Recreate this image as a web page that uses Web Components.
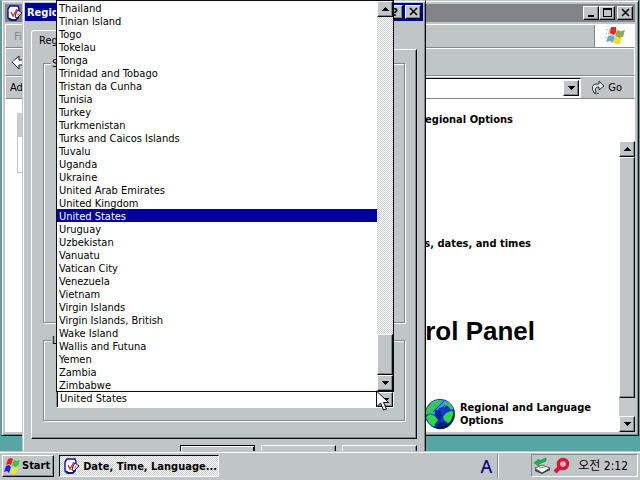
<!DOCTYPE html>
<html lang="en">
<head>
<meta charset="utf-8">
<title>Desktop</title>
<style>
    body{
        margin:0;
        --face:#c0c6c8;
        --light:#ffffff;
        --shade:#83898b;
        --dark:#0a0c10;
        --navy:#00009a;
        --desk:#57a6a5;
        --dither:repeating-conic-gradient(#ffffff 0 25%, #c8cccd 0 50%) 0 0 / 2px 2px;
        font:11px/13px "DejaVu Sans Condensed", "Noto Sans CJK KR", sans-serif;
        color:#000;
    }
</style>
</head>
<body>
<desk-top></desk-top>

<script>
const shared = /*css*/`
    *{
        box-sizing:border-box;
    }
    svg{
        display:block;
    }
    button,input,select{
        font:inherit;
        color:inherit;
        margin:0;
        padding:0;
        border:0;
        border-radius:0;
        outline:none;
    }
    .raised{
        background:var(--face);
        border:1px solid;
        border-color:var(--light) var(--dark) var(--dark) var(--light);
        box-shadow:inset -1px -1px 0 var(--shade);
    }
`;

const noteIcon = /*html*/`
    <svg width="16" height="16" viewBox="0 0 16 16">
        <path d="M3 1h8l1 3-1 9-3 2H3l-2-2V4z" fill="#fff" stroke="#10108c" stroke-width="1.4"/>
        <path d="M2 13l3 2h4l2-3" fill="none" stroke="#0c0c60" stroke-width="1.4"/>
        <path d="M4 7l2 4 4-7" fill="none" stroke="#c04038" stroke-width="1.5"/>
        <path d="M11 5l4 3-5 5-2-1 1-4z" fill="#f4e8e0" stroke="#14145c"/>
        <path d="M10 9l3-1-2 3z" fill="#e08050"/>
    </svg>`;

const arrow = (dir) => /*html*/`
    <svg width="7" height="4" viewBox="0 0 7 4" shape-rendering="crispEdges">
        <path d="${dir === 'up' ? 'M0 4L3 0h1l3 4z' : 'M0 0h7L4 4H3z'}" fill="#000"/>
    </svg>`;

class ScrollBar extends HTMLElement {
    constructor() {
        super();
        this.attachShadow({ mode: 'open' });
    }

    connectedCallback() {
        const [before, thumb, after] = this.getAttribute('parts').split(' ');
        this.shadowRoot.innerHTML = /*html*/`
        <style>
            ${shared}
            :host{
                display:flex;
                flex-direction:column;
                width:16px;
                background:var(--track, var(--dither));
            }
            button{
                display:grid;
                place-items:center;
                height:16px;
                flex:none;
            }
        </style>
        <button class="raised" aria-label="Up">${arrow('up')}</button>
        <span style="flex:${before} 0 0"></span>
        <span class="raised" style="flex:${thumb} 0 0"></span>
        <span style="flex:${after} 0 0"></span>
        <button class="raised" aria-label="Down">${arrow('down')}</button>
        `;
    }
}
customElements.define('scroll-bar', ScrollBar);

class TitleBar extends HTMLElement {
    constructor() {
        super();
        this.attachShadow({ mode: 'open' });
    }

    glyph(name) {
        if (name === 'help') return '?';
        const shapes = {
            min: '<path d="M2 7h6v2H2z"/>',
            max: '<path d="M1 0h9v9H1zM2 2v6h7V2z" fill-rule="evenodd"/>',
            close: '<path d="M2 1l7 7M9 1L2 8" fill="none" stroke="#000" stroke-width="1.500"/>'
        };
        return `<svg width="11" height="10" viewBox="0 0 11 10">${shapes[name]}</svg>`;
    }

    connectedCallback() {
        const names = this.getAttribute('buttons').split(' ');
        this.shadowRoot.innerHTML = /*html*/`
        <style>
            ${shared}
            :host{
                display:flex;
                align-items:center;
                height:18px;
                padding:0 2px;
                background:var(--bar, #82848a);
                color:#fff;
                font-weight:bold;
            }
            .title{
                flex:1;
                display:flex;
                white-space:nowrap;
            }
            button{
                display:grid;
                place-items:center;
                width:16px;
                height:14px;
                color:#000;
            }
            .close{
                margin-left:2px;
            }
        </style>
        <div class="title"><slot></slot></div>
        ${names.map(n => `<button class="raised ${n}" aria-label="${n}">${this.glyph(n)}</button>`).join('')}
        `;
    }
}
customElements.define('title-bar', TitleBar);

class DropList extends HTMLElement {
    constructor() {
        super();
        this.attachShadow({ mode: 'open' });
    }

    static get items() {
        return ['Thailand', 'Tinian Island', 'Togo', 'Tokelau', 'Tonga', 'Trinidad and Tobago',
            'Tristan da Cunha', 'Tunisia', 'Turkey', 'Turkmenistan', 'Turks and Caicos Islands',
            'Tuvalu', 'Uganda', 'Ukraine', 'United Arab Emirates', 'United Kingdom',
            'United States', 'Uruguay', 'Uzbekistan', 'Vanuatu', 'Vatican City', 'Venezuela',
            'Vietnam', 'Virgin Islands', 'Virgin Islands, British', 'Wake Island',
            'Wallis and Futuna', 'Yemen', 'Zambia', 'Zimbabwe'];
    }

    connectedCallback() {
        const value = this.getAttribute('value');
        this.shadowRoot.innerHTML = /*html*/`
        <style>
            ${shared}
            :host{
                display:block;
                position:relative;
                z-index:2;
            }
            .box{
                display:flex;
                height:18px;
                background:#fff;
                border:1px solid;
                border-color:var(--shade) var(--light) var(--light) var(--shade);
                box-shadow:inset 1px 1px 0 var(--dark);
            }
            select{
                appearance:none;
                flex:1;
                min-width:0;
                padding:0 0 2px 3px;
                background:transparent;
            }
            .box span{
                display:grid;
                place-items:center;
                width:16px;
                margin-top:1px;
            }
            /* the open list hangs off the closed box */
            .list{
                position:absolute;
                bottom:calc(100% - 2px);
                left:0;
                right:0;
                display:flex;
                background:#fff;
                border:1px solid var(--dark);
            }
            ul{
                flex:1;
                margin:0;
                padding:0;
                list-style:none;
            }
            li{
                height:13px;
                padding:1px 0 0 2px;
                line-height:13px;
            }
            .on{
                background:var(--navy);
                color:#fff;
            }
        </style>
        <div class="box">
            <select aria-label="Location"><option>${value}</option></select>
            <span class="raised">${arrow('down')}</span>
        </div>
        <div class="list">
            <ul role="listbox" aria-label="Location">
                ${DropList.items.map(i => `<li role="option" class="${i === value ? 'on' : ''}">${i}</li>`).join('')}
            </ul>
            <scroll-bar parts="319 39 0"></scroll-bar>
        </div>
        `;
    }
}
customElements.define('drop-list', DropList);

class RegionDialog extends HTMLElement {
    constructor() {
        super();
        this.attachShadow({ mode: 'open' });
    }

    connectedCallback() {
        this.shadowRoot.innerHTML = /*html*/`
        <style>
            ${shared}
            :host{
                display:block;
                width:404px;
                padding:1px;
                background:var(--face);
                border:1px solid;
                border-color:var(--face) var(--dark) var(--dark) var(--face);
                box-shadow:inset 1px 1px 0 var(--light), inset -1px -1px 0 var(--shade);
            }
            title-bar{
                --bar:var(--navy);
                margin:1px 1px 0;
            }
            .body{
                padding:9px 7px 7px;
            }
            .tab{
                display:block;
                position:relative;
                z-index:1;
                height:20px;
                margin-bottom:-1px;
                padding:0 7px;
                background:var(--face);
                border:1px solid;
                border-color:var(--light) var(--dark) transparent var(--light);
                border-radius:3px 3px 0 0;
            }
            .panel{
                padding:7px 11px 17px;
                border:1px solid;
                border-color:var(--light) var(--dark) var(--dark) var(--light);
                box-shadow:inset -1px -1px 0 var(--shade);
            }
            fieldset{
                min-width:0;
                margin:0;
                padding:43px 10px 12px 12px;
                border:1px solid var(--shade);
                box-shadow:1px 1px 0 var(--light), inset 1px 1px 0 var(--light);
            }
            fieldset + fieldset{
                margin-top:11px;
            }
            .formats{
                min-height:266px;
            }
            legend{
                margin-left:-5px;
                padding:0 1px;
                background:var(--face);
            }
            .actions{
                display:flex;
                justify-content:flex-end;
                gap:6px;
                margin-top:6px;
            }
            .actions button{
                width:75px;
                height:23px;
            }
            .actions .default{
                border-color:var(--dark);
                box-shadow:inset 1px 1px 0 var(--light), inset -1px -1px 0 var(--dark);
            }
        </style>
        <title-bar buttons="help close">Regional and Language Options</title-bar>
        <div class="body">
            <button class="tab">Regional Options</button>
            <div class="panel">
                <fieldset class="formats">
                    <legend>Standards and formats</legend>
                </fieldset>
                <fieldset>
                    <legend>Location</legend>
                    <drop-list value="United States"></drop-list>
                </fieldset>
            </div>
            <div class="actions">
                <button class="raised default" aria-label="OK"></button>
                <button class="raised" aria-label="Cancel"></button>
                <button class="raised" aria-label="Apply"></button>
            </div>
        </div>
        `;
    }
}
customElements.define('region-dialog', RegionDialog);

class ExplorerWindow extends HTMLElement {
    constructor() {
        super();
        this.attachShadow({ mode: 'open' });
    }

    static get globe() {
        return /*html*/`
        <svg width="32" height="32" viewBox="0 0 32 32">
            <circle cx="16" cy="16" r="15" fill="#1238c8"/>
            <path d="M8 4Q16 0 24 4L21 9l-6 1-5 7-4-2z" fill="#3c9ee0"/>
            <path d="M9 14L20 3M11 16L23 5M8 10l6-7M14 17l9-9" stroke="#1638b8"/>
            <path d="M3 10L8 4l5-2 5 1-4 4-3 2-2 5-4 2-4 1z" fill="#38c850"/>
            <path d="M2 19l4-3 5 2 3 4-3 4-1 3-5-4z" fill="#30d848"/>
            <path d="M21 3l5 2 4 6-3 1-3-4-4-1z" fill="#48b868"/>
            <path d="M19 19l3-4 5-2 4 1v5l-3 5-4 1-4-3z" fill="#30d848"/>
            <path d="M11 12l5 1 2 5-3 4-4-4z" fill="#0a2488"/>
            <path d="M14 25l6-1 4 3-6 4-6-1z" fill="#082070"/>
            <path d="M29 9Q34 20 24 29Q15 34 7 28Q16 32 23 27Q31 20 29 9z" fill="#061a50"/>
        </svg>`;
    }

    connectedCallback() {
        this.shadowRoot.innerHTML = /*html*/`
        <style>
            ${shared}
            :host{
                display:flex;
                flex-direction:column;
                padding:2px;
                background:var(--face);
                border:1px solid;
                border-color:var(--face) var(--dark) var(--dark) var(--shade);
                box-shadow:inset 1px 1px 0 var(--light), inset -1px -1px 0 var(--shade);
            }
            title-bar{
                margin:1px 1px 2px;
            }
            .bar{
                display:flex;
                align-items:center;
                margin:0 1px;
                border:1px solid;
                border-color:var(--light) var(--light) var(--shade) var(--light);
            }
            .bar button{
                background:none;
            }
            .menu{
                height:24px;
                padding-left:8px;
                color:#84888a;
            }
            .menu .logo{
                display:grid;
                place-items:center;
                align-self:stretch;
                width:40px;
                margin-left:auto;
                background:#fff;
                border-left:1px solid var(--shade);
            }
            .tools{
                height:28px;
                padding-left:5px;
            }
            .address{
                height:23px;
                gap:6px;
                padding:0 12px 0 4px;
            }
            .field{
                flex:1;
                display:flex;
                height:20px;
                padding:1px;
                background:#fff;
                border:1px solid;
                border-color:var(--dark) var(--light) var(--light) var(--dark);
            }
            .field input{
                flex:1;
                min-width:0;
            }
            .bar .field button{
                display:grid;
                place-items:center;
                width:16px;
                background:var(--face);
            }
            .go{
                display:flex;
                align-items:center;
                gap:3px;
                padding-left:4px;
            }
            .content{
                flex:1;
                display:grid;
                grid-template-columns:180px 1fr 16px;
                margin:0 1px 1px;
                padding-left:12px;
                background:#fff;
                min-height:0;
                font-weight:bold;
            }
            aside{
                height:60px;
                margin-top:14px;
                border:1px solid #c0c4c6;
                border-top:24px solid #c8cccd;
            }
            main{
                padding:14px 0 0 20px;
            }
            p,h1,h2{
                margin:0;
                font-size:11px;
                text-align:right;
                white-space:nowrap;
            }
            h1{
                width:296px;
            }
            p{
                width:314px;
                margin-top:111px;
            }
            h2{
                width:318px;
                margin:66px 0 52px;
                font:bold 26px/30px "Liberation Sans", sans-serif;
            }
            a{
                display:flex;
                align-items:center;
                gap:4px;
                width:175px;
                margin-left:207px;
                color:inherit;
                text-decoration:none;
            }
            a svg{
                flex:none;
            }
            scroll-bar{
                --track:#c4cacc;
                margin-top:42px;
            }
        </style>
        <title-bar buttons="min max close">${noteIcon}</title-bar>
        <div class="bar menu">
            <button>File</button>
            <span class="logo">
                <svg width="20" height="20" viewBox="0 0 20 20">
                    <path d="M4 3l4-2 4 2-2 6-4-1-3 1z" fill="#d8b8a8"/>
                    <path d="M6 1l5 0 0 5-2 3-4-2z" fill="#e02828"/>
                    <path d="M12 4l4 1 4-1-2 7-4 1-4-2z" fill="#90a858"/>
                    <path d="M3 10l4-1 3 2-2 6-3-2-4 1z" fill="#70a8c8"/>
                    <path d="M10 11l4 1 3-1-2 7-4 0-3-2z" fill="#f0e020"/>
                    <path d="M1 4l2-1M0 8l2-1M0 12l2-1" stroke="#c0b0b0"/>
                </svg>
            </span>
        </div>
        <div class="bar tools">
            <button aria-label="Back">
                <svg width="20" height="16" viewBox="0 0 20 16">
                    <path d="M1 8l7-6v4h11v5H8v4z" fill="#fff" stroke="#101828"/>
                    <path d="M1 8l3-3" stroke="#b06070"/>
                </svg>
            </button>
        </div>
        <div class="bar address">
            <label for="addr">Address</label>
            <div class="field">
                <input id="addr" type="text">
                <button class="raised" aria-label="Open">${arrow('down')}</button>
            </div>
            <button class="go">
                <svg width="14" height="15" viewBox="0 0 14 15">
                    <path d="M3 13Q-1 5 5 4L8 4V1l5 5-5 4V7Q3 6 5 13z" fill="#e4eaea" stroke="#303638"/>
                    <path d="M3 13q2 2 5 0" fill="none" stroke="#50585a"/>
                </svg>
                Go
            </button>
        </div>
        <div class="content">
            <aside></aside>
            <main>
                <h1>Date, Time, Language, and Regional Options</h1>
                <p>Change the format of numbers, dates, and times</p>
                <h2>or pick a Control Panel</h2>
                <a href="#">${ExplorerWindow.globe}<span>Regional and Language Options</span></a>
            </main>
            <scroll-bar parts="0 241 18"></scroll-bar>
        </div>
        `;
    }
}
customElements.define('explorer-window', ExplorerWindow);

class TaskBar extends HTMLElement {
    constructor() {
        super();
        this.attachShadow({ mode: 'open' });
    }

    connectedCallback() {
        this.shadowRoot.innerHTML = /*html*/`
        <style>
            ${shared}
            :host{
                display:flex;
                align-items:center;
                height:29px;
                padding:0 2px;
                background:var(--face);
                box-shadow:inset 0 1px 0 var(--face), inset 0 2px 0 var(--light);
            }
            button{
                display:flex;
                align-items:center;
                height:22px;
                font-weight:bold;
            }
            .start{
                gap:1px;
                padding:0 3px 0 1px;
            }
            .task{
                gap:3px;
                width:160px;
                margin-left:5px;
                padding:1px 0 0 4px;
                background:var(--dither);
                border:1px solid;
                border-color:var(--dark) var(--light) var(--light) var(--dark);
                white-space:nowrap;
            }
            .lang{
                margin:0 5px 0 auto;
                color:#0c0c78;
                font:500 18px/20px "Noto Sans", sans-serif;
            }
            .line{
                width:2px;
                height:24px;
                margin-right:32px;
                border-left:1px solid var(--shade);
                border-right:1px solid var(--light);
            }
            .tray{
                display:flex;
                align-items:center;
                gap:2px;
                height:23px;
                padding:0 9px 0 1px;
                border:1px solid;
                border-color:var(--shade) var(--light) var(--light) var(--shade);
            }
            time{
                margin-left:6px;
                padding-top:2px;
                font-size:12px;
            }
        </style>
        <button class="raised start">
            <svg width="17" height="16" viewBox="0 0 17 16">
                <path d="M4 1l3-1 2 1-2 6-2-1-3 1z" fill="#e02020"/>
                <path d="M10 2l3 1 3-1-2 6-3 1-3-2z" fill="#38c838"/>
                <path d="M2 8l3-1 2 2-2 6-2-2-3 1z" fill="#2020e0"/>
                <path d="M8 9l3 1 3-1-2 6-3 1-3-2z" fill="#f0e828"/>
            </svg>
            Start
        </button>
        <button class="task">${noteIcon}Date, Time, Language...</button>
        <span class="lang">A</span>
        <span class="line"></span>
        <div class="tray">
            <svg width="18" height="18" viewBox="0 0 18 18">
                <path d="M2 11l7-3 8 3-8 5z" fill="#fff" stroke="#585e60"/>
                <path d="M2 12v2l7 3 8-4v-2l-8 5z" fill="#34383a"/>
                <path d="M13 1L6 4V2L1 6l5 3V7l7-3z" fill="#18b848" stroke="#108838" stroke-width=".6"/>
                <path d="M6 11l6-1" stroke="#888"/>
            </svg>
            <svg width="17" height="18" viewBox="0 0 17 18">
                <path d="M2 15l5-5" stroke="#d01838" stroke-width="4"/>
                <circle cx="10" cy="7" r="4.5" fill="#e8d4d8" stroke="#d81838" stroke-width="3.6"/>
                <path d="M10 5v4" stroke="#d06878"/>
            </svg>
            <time>오전 2:12</time>
        </div>
        `;
    }
}
customElements.define('task-bar', TaskBar);

class DeskTop extends HTMLElement {
    constructor() {
        super();
        this.attachShadow({ mode: 'open' });
    }

    connectedCallback() {
        this.shadowRoot.innerHTML = /*html*/`
        <style>
            ${shared}
            :host{
                display:flex;
                flex-direction:column;
                height:100vh;
                position:relative;
                overflow:hidden;
                background:var(--desk);
            }
            .area{
                flex:1;
                position:relative;
                overflow:hidden;
            }
            explorer-window{
                position:absolute;
                inset:0 1px 15px 1px;
            }
            region-dialog{
                position:absolute;
                top:0;
                left:22px;
            }
            .pointer{
                position:absolute;
                z-index:3;
                top:390px;
                left:376px;
            }
        </style>
        <div class="area">
            <explorer-window></explorer-window>
            <region-dialog></region-dialog>
            <svg class="pointer" width="13" height="22" viewBox="0 0 13 22">
                <path d="M.5 1v16l4-4 3 7 3-1-3-6.500h5z" fill="#fff" stroke="#000"/>
            </svg>
        </div>
        <task-bar></task-bar>
        `;
    }
}
customElements.define('desk-top', DeskTop);
</script>
</body>
</html>
